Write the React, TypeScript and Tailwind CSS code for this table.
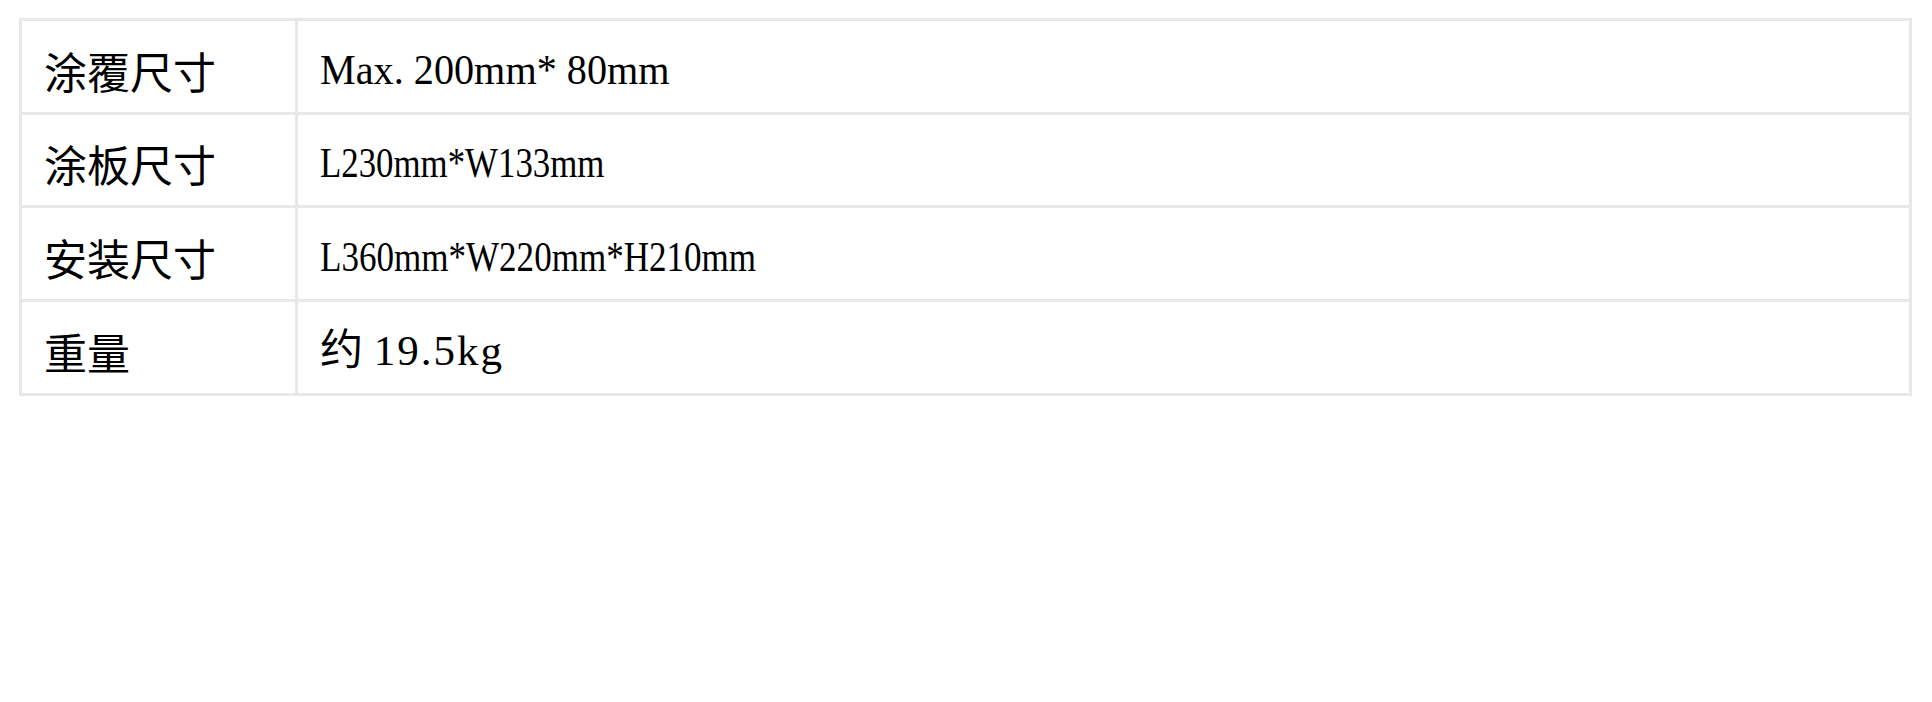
import React from "react";

const CJK = "font-['Noto_Sans_CJK_SC',sans-serif]";
const SERIF = "font-['Liberation_Serif','Noto_Sans_CJK_SC',serif]";

function Row({
  label,
  height,
  last,
  children,
}: {
  label: string;
  height: string;
  last?: boolean;
  children: React.ReactNode;
}) {
  return (
    <div
      className={
        "flex box-content " +
        height +
        (last ? "" : " border-b-[3px] border-[#e8e8e8]")
      }
    >
      <div
        className={
          "w-[276px] shrink-0 border-r-[3px] border-[#e8e8e8] flex items-center pl-[22px] pt-[7px] text-[43px] leading-none text-black " +
          CJK
        }
      >
        {label}
      </div>
      <div className="flex-1 flex items-center pl-[22px] leading-none text-black">{children}</div>
    </div>
  );
}

export default function App() {
  return (
    <div className="w-[1932px] h-[702px] bg-white pt-[18px] pl-[19px]">
      <div className="w-[1893px] border-[3px] border-[#e8e8e8] flex flex-col">
        <Row label="涂覆尺寸" height="h-[91px]">
          <span
            className={
              "inline-block mt-[5px] origin-left scale-x-[0.935] whitespace-pre text-[43px] " + SERIF
            }
          >
            Max. 200mm* 80mm
          </span>
        </Row>
        <Row label="涂板尺寸" height="h-[90px]">
          <span
            className={
              "inline-block mt-[5px] origin-left scale-x-[0.81] whitespace-pre text-[43px] " + SERIF
            }
          >
            L230mm*W133mm
          </span>
        </Row>
        <Row label="安装尺寸" height="h-[91px]">
          <span
            className={
              "inline-block mt-[5px] origin-left scale-x-[0.815] whitespace-pre text-[43px] " + SERIF
            }
          >
            L360mm*W220mm*H210mm
          </span>
        </Row>
        <Row label="重量" height="h-[91px]" last>
          <span className="mt-[2px] whitespace-pre leading-none">
            <span className={"text-[43px] " + CJK}>约</span>
            <span className={"text-[43px] ml-[-2px] tracking-[2px] " + SERIF}> 19.5kg</span>
          </span>
        </Row>
      </div>
    </div>
  );
}
